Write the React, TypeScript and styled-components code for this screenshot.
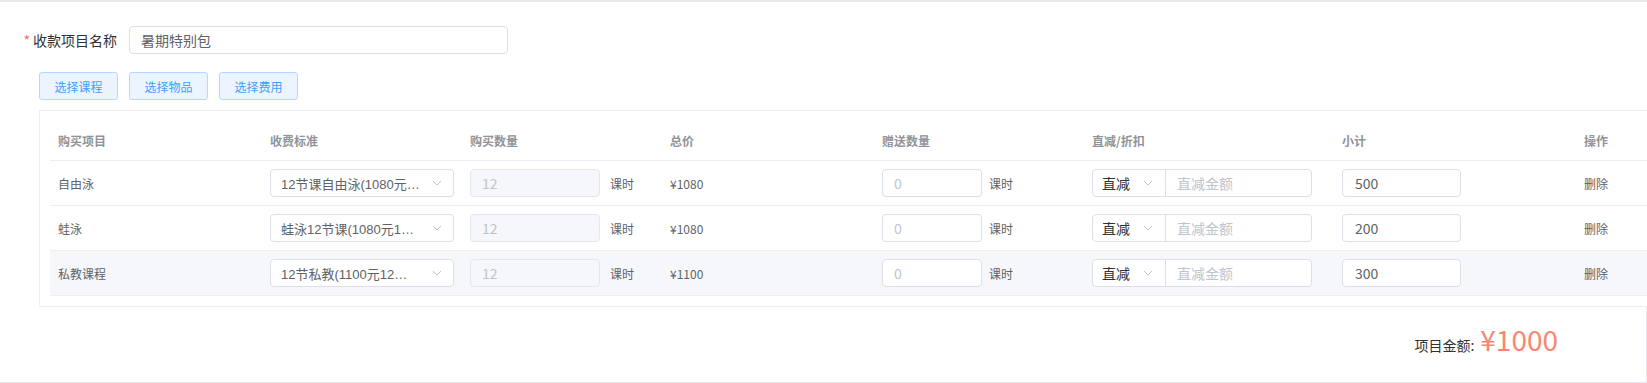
import React from 'react'
import styled, { createGlobalStyle } from 'styled-components'

const GlobalStyle = createGlobalStyle`
  body {
    margin: 0;
    overflow: hidden;
    background: #fff;
    font-family: 'Noto Sans CJK SC', 'Noto Sans', sans-serif;
  }
  * {
    box-sizing: border-box;
  }
`

const Card = styled.div`
  width: 1647px;
  height: 383px;
  display: flex;
  flex-direction: column;
  overflow: hidden;
  border-top: 2px solid #e8e8e8;
  border-bottom: 1px solid #e4e7ed;
`

const FormRow = styled.div`
  display: flex;
  align-items: center;
  margin-top: 24px;
  height: 28px;
`

const FormLabel = styled.label`
  width: 129px;
  padding-right: 12px;
  text-align: right;
  font-size: 14px;
  line-height: 28px;
  color: #303133;
`

const Required = styled.span`
  color: #f56c6c;
  margin-right: 3px;
`

const TextInput = styled.div`
  width: 379px;
  height: 28px;
  padding: 0 11px;
  display: flex;
  align-items: center;
  border: 1px solid #dcdfe6;
  border-radius: 4px;
  font-size: 14px;
  color: #606266;
`

const ButtonRow = styled.div`
  display: flex;
  gap: 11px;
  margin-top: 18px;
  padding-left: 39px;
`

const PlainButton = styled.button`
  width: 79px;
  height: 28px;
  padding: 0;
  border: 1px solid #b3d8ff;
  border-radius: 3px;
  background: #ecf5ff;
  color: #409eff;
  font-family: inherit;
  font-size: 12px;
  cursor: pointer;
`

const TableBox = styled.div`
  margin-top: 10px;
  margin-left: 39px;
  width: 1700px;
  flex-shrink: 0;
  padding: 10px;
  border: 1px solid #ebeef5;
  background: #fff;
`

const COLUMNS = '212px 200px 200px 212px 210px 250px 242px 100px'

const HeadRow = styled.div`
  display: grid;
  grid-template-columns: ${COLUMNS};
  height: 40px;
  align-items: center;
  border-bottom: 1px solid #ebeef5;
`

const HeadCell = styled.div`
  padding-left: 8px;
  font-size: 12px;
  font-weight: 700;
  color: #909399;
`

const BodyRow = styled.div<{ $hover?: boolean }>`
  display: grid;
  grid-template-columns: ${COLUMNS};
  height: 45px;
  align-items: center;
  border-bottom: 1px solid #ebeef5;
  background: ${({ $hover }) => ($hover ? '#f5f7fa' : '#fff')};
`

const Cell = styled.div`
  display: flex;
  align-items: center;
  padding-left: 8px;
  font-size: 12px;
  color: #606266;
  min-width: 0;
`

const Field = styled.div<{ $width: number; $disabled?: boolean; $pad?: number }>`
  width: ${({ $width }) => $width}px;
  height: 28px;
  flex-shrink: 0;
  display: flex;
  align-items: center;
  padding-left: ${({ $pad }) => $pad ?? 11}px;
  border: 1px solid ${({ $disabled }) => ($disabled ? '#e4e7ed' : '#dcdfe6')};
  border-radius: 4px;
  background: ${({ $disabled }) => ($disabled ? '#f5f7fa' : '#fff')};
  font-size: 14px;
  color: #606266;
`

const Muted = styled.span`
  color: #c0c4cc;
`

const SelectText = styled.span`
  width: 139px;
  flex-shrink: 0;
  overflow: hidden;
  white-space: nowrap;
  text-overflow: ellipsis;
  font-family: 'Liberation Sans', 'Noto Sans CJK SC', sans-serif;
  font-size: 13px;
`

const ArrowBox = styled.span`
  flex: 1;
  min-width: 29px;
  display: flex;
  align-items: center;
  justify-content: center;
`

const Unit = styled.span<{ $gap: number }>`
  margin-left: ${({ $gap }) => $gap}px;
`

const Group = styled.div`
  width: 220px;
  height: 28px;
  display: flex;
  border: 1px solid #dcdfe6;
  border-radius: 4px;
  background: #fff;
  font-size: 14px;
  overflow: hidden;
`

const Prepend = styled.div`
  width: 73px;
  flex-shrink: 0;
  display: flex;
  align-items: center;
  padding-left: 9px;
  border-right: 1px solid #dcdfe6;
  color: #303133;
`

const GroupInput = styled.div`
  flex: 1;
  display: flex;
  align-items: center;
  padding-left: 11px;
  color: #c0c4cc;
`

const Footer = styled.div`
  flex: 1;
  display: flex;
  justify-content: flex-end;
  align-items: center;
  padding-right: 88px;
  padding-bottom: 12px;
  border-right: 1px solid #e4e7ed;
`

const Total = styled.div`
  display: flex;
  align-items: baseline;
  font-size: 14px;
  color: #303133;
`

const Amount = styled.span`
  margin-left: 6px;
  font-size: 28px;
  color: #fa8571;
`

function Chevron() {
  return (
    <svg width="10" height="6" viewBox="0 0 10 6">
      <polyline points="1,1 5,5 9,1" fill="none" stroke="#c0c4cc" strokeWidth="1" />
    </svg>
  )
}

const HEADERS = ['购买项目', '收费标准', '购买数量', '总价', '赠送数量', '直减/折扣', '小计', '操作']

const ROWS = [
  { name: '自由泳', plan: '12节课自由泳(1080元12课时)', price: '¥1080', subtotal: '500' },
  { name: '蛙泳', plan: '蛙泳12节课(1080元12课时)', price: '¥1080', subtotal: '200' },
  { name: '私教课程', plan: '12节私教(1100元12课时)', price: '¥1100', subtotal: '300' }
]

export default function App() {
  return (
    <>
      <GlobalStyle />
      <Card>
        <FormRow>
          <FormLabel>
            <Required>*</Required>收款项目名称
          </FormLabel>
          <TextInput>暑期特别包</TextInput>
        </FormRow>
        <ButtonRow>
          <PlainButton>选择课程</PlainButton>
          <PlainButton>选择物品</PlainButton>
          <PlainButton>选择费用</PlainButton>
        </ButtonRow>
        <TableBox>
          <HeadRow>
            {HEADERS.map((h) => (
              <HeadCell key={h}>{h}</HeadCell>
            ))}
          </HeadRow>
          {ROWS.map((row, i) => (
            <BodyRow key={row.name} $hover={i === 2}>
              <Cell>{row.name}</Cell>
              <Cell>
                <Field $width={184} $pad={10}>
                  <SelectText>{row.plan}</SelectText>
                  <ArrowBox>
                    <Chevron />
                  </ArrowBox>
                </Field>
              </Cell>
              <Cell>
                <Field $width={130} $disabled>
                  <Muted>12</Muted>
                </Field>
                <Unit $gap={10}>课时</Unit>
              </Cell>
              <Cell>{row.price}</Cell>
              <Cell>
                <Field $width={100}>
                  <Muted>0</Muted>
                </Field>
                <Unit $gap={7}>课时</Unit>
              </Cell>
              <Cell>
                <Group>
                  <Prepend>
                    直减
                    <ArrowBox>
                      <Chevron />
                    </ArrowBox>
                  </Prepend>
                  <GroupInput>直减金额</GroupInput>
                </Group>
              </Cell>
              <Cell>
                <Field $width={119} $pad={12}>
                  {row.subtotal}
                </Field>
              </Cell>
              <Cell>删除</Cell>
            </BodyRow>
          ))}
        </TableBox>
        <Footer>
          <Total>
            项目金额:
            <Amount>¥1000</Amount>
          </Total>
        </Footer>
      </Card>
    </>
  )
}
